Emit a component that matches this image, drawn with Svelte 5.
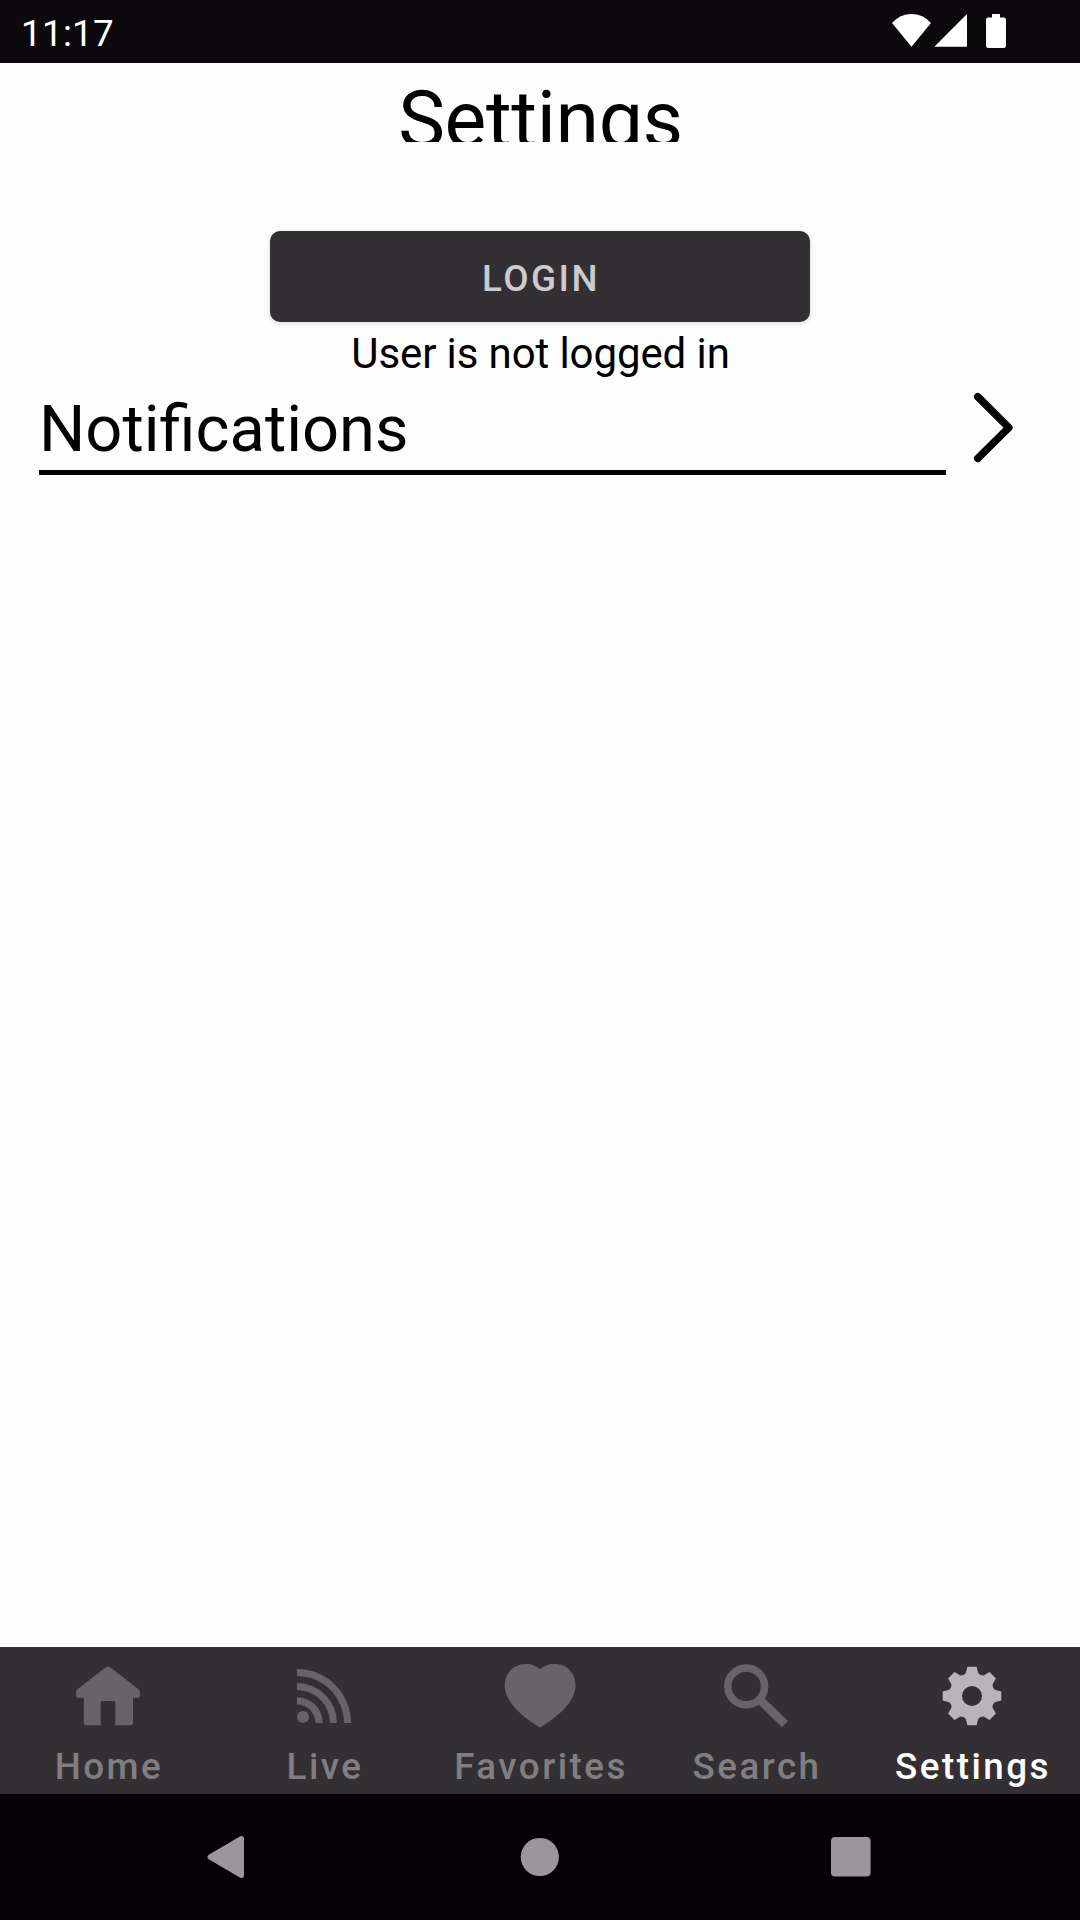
<script>
  const tabs = ['Home', 'Live', 'Favorites', 'Search', 'Settings'];
  const active = 'Settings';

  // Outline of an eight-toothed cog centred on the origin.
  function cogPath() {
    const turn = (x, y, i) => {
      const a = (i * Math.PI) / 4;
      return `${(x * Math.cos(a) - y * Math.sin(a)).toFixed(2)} ${(x * Math.sin(a) + y * Math.cos(a)).toFixed(2)}`;
    };
    let d = '';
    for (let i = 0; i < 8; i++) {
      d += `${i ? 'L' : 'M'}${turn(-6.3, -22.7, i)}L${turn(-4.5, -29.3, i)}L${turn(4.5, -29.3, i)}L${turn(6.3, -22.7, i)}Q${turn(8.4, -20.3, i)} ${turn(-6.3, -22.7, i + 1)}`;
    }
    return d + 'ZM10 0A10 10 0 1 0 -10 0A10 10 0 1 0 10 0Z';
  }
  const cog = cogPath();
</script>

<div class="screen">
  <header class="status">
    <span class="time">11:17</span>
    <svg class="indicators" width="120" height="63" viewBox="890 0 120 63" fill="#fff">
      <path d="M892 23Q900 14 911.5 14T931 23L911.5 46.7Z" />
      <path d="M934.3 46.8L967 14V46.8Z" />
      <path d="M992 14h8v3.5h3.8a2.2 2.2 0 0 1 2.2 2.2v26a2.2 2.2 0 0 1-2.2 2.2h-15.6a2.2 2.2 0 0 1-2.2-2.2v-26a2.2 2.2 0 0 1 2.2-2.2h3.8Z" />
    </svg>
  </header>

  <main>
    <h1>Settings</h1>
    <button class="login">LOGIN</button>
    <p class="state">User is not logged in</p>
    <div class="row">
      <span class="item">Notifications</span>
      <svg width="60" height="90" viewBox="0 0 60 90" fill="none" stroke="#000" stroke-width="7.6" stroke-linecap="round" stroke-linejoin="round">
        <path d="M11.8 14.8L42.8 45.6L11.8 76.4" />
      </svg>
    </div>
  </main>

  <nav class="tabs">
    {#each tabs as tab}
      <div class="tab" class:active={tab === active}>
        <svg width="80" height="80" viewBox="0 0 80 80" fill="currentColor">
          {#if tab === 'Home'}
            <path d="M37.6 12.6Q40 10.9 42.4 12.6L70.3 34Q72 35.5 72 37.5V40.5Q72 42.7 69.8 42.7H65V68Q65 70.3 62.7 70.3H47.3V48Q47.3 46 45.3 46H34.7Q32.7 46 32.7 48V70.3H18Q15.8 70.3 15.8 68V42.7H10.2Q8 42.7 8 40.5V37.5Q8 35.5 9.7 34Z" />
          {:else if tab === 'Live'}
            <circle cx="19" cy="62" r="6" />
            <path d="M13 42.3A25.7 25.7 0 0 1 38.7 68H31.5A18.5 18.5 0 0 0 13 49.5ZM13 28A40 40 0 0 1 53 68H46A33 33 0 0 0 13 35ZM13 14A54 54 0 0 1 67 68H60A47 47 0 0 0 13 21Z" />
          {:else if tab === 'Favorites'}
            <path d="M40 72.7C20 60.5 4.7 46 4.7 30.3C4.7 17.3 14 9 26 9C32 9 36.5 11 40 14.2C43.5 11 48.5 9 54.5 9C66.5 9 75.5 17.3 75.5 30.3C75.5 46 60 60.5 40 72.7Z" />
          {:else if tab === 'Search'}
            <g fill="none" stroke="currentColor">
              <circle cx="30.2" cy="31.4" r="18.4" stroke-width="7.5" />
              <path d="M43.8 44.6L68.9 69.1" stroke-width="8.6" />
            </g>
          {:else}
            <path transform="translate(40 41)" fill-rule="evenodd" d={cog} />
          {/if}
        </svg>
        <span>{tab}</span>
      </div>
    {/each}
  </nav>

  <footer class="system">
    <svg width="40" height="46" viewBox="0 0 40 46"><path d="M4 23L35.5 4.5V41.5Z" stroke="#999799" stroke-width="5" stroke-linejoin="round" fill="#999799" /></svg>
    <svg width="40" height="40" viewBox="0 0 40 40"><circle cx="20.8" cy="20" r="19.1" fill="#999799" /></svg>
    <svg width="40" height="40" viewBox="0 0 40 40"><rect width="39.6" height="39.6" rx="4" fill="#999799" /></svg>
  </footer>
</div>

<style>
  :global(body) {
    background: #fefdfe;
  }
  .screen {
    width: 1080px;
    height: 1920px;
    display: flex;
    flex-direction: column;
    overflow: hidden;
    background: #fefdfe;
    color: #000;
    font-family: Roboto, sans-serif;
  }
  .status {
    box-sizing: border-box;
    height: 62.7px;
    flex: none;
    display: flex;
    justify-content: space-between;
    padding: 0 70px 0 21px;
    background: #0b090c;
  }
  .time {
    color: #fff;
    font-size: 36.75px;
    line-height: 67px;
    letter-spacing: 0.3px;
  }
  main {
    flex: 1;
    display: flex;
    flex-direction: column;
    align-items: center;
  }
  h1 {
    margin: 0;
    height: 79px;
    overflow: hidden;
    font-size: 78.75px;
    font-weight: 400;
    line-height: 115px;
    letter-spacing: -0.35px;
    padding-left: 1px;
  }
  .login {
    width: 540px;
    height: 91px;
    margin-top: 89.3px;
    padding: 4px 0 0 2px;
    border: 0;
    border-radius: 10px;
    background: #333033;
    box-shadow: 0 1px 4px rgba(0, 0, 0, 0.16);
    color: #cdcbce;
    font: 500 36.75px/87px Roboto, sans-serif;
    letter-spacing: 2.5px;
  }
  .state {
    margin: 5px 0 0 1px;
    font-size: 42px;
    line-height: 54px;
    letter-spacing: -0.1px;
  }
  .row {
    align-self: stretch;
    display: flex;
    margin: 1px 54px 0 39px;
    justify-content: space-between;
  }
  .item {
    box-sizing: border-box;
    width: 907px;
    height: 93px;
    border-bottom: 5px solid #000;
    font-size: 65px;
    line-height: 95px;
  }
  .tabs {
    height: 147px;
    flex: none;
    display: grid;
    grid-template-columns: repeat(5, 1fr);
    background: #333033;
  }
  .tab {
    display: flex;
    flex-direction: column;
    align-items: center;
    padding-top: 8px;
    color: #666467;
  }
  .tab span {
    color: #807e81;
    font-size: 36.75px;
    font-weight: 500;
    line-height: 44px;
    margin-top: 10px;
    padding-left: 2px;
    letter-spacing: 2.5px;
  }
  .active {
    color: #b7b5b8;
  }
  .active span {
    color: #fff;
  }
  .system {
    box-sizing: border-box;
    height: 126px;
    flex: none;
    display: flex;
    align-items: center;
    justify-content: space-between;
    padding: 0 209px 0 206px;
    background: #020003;
  }
</style>
